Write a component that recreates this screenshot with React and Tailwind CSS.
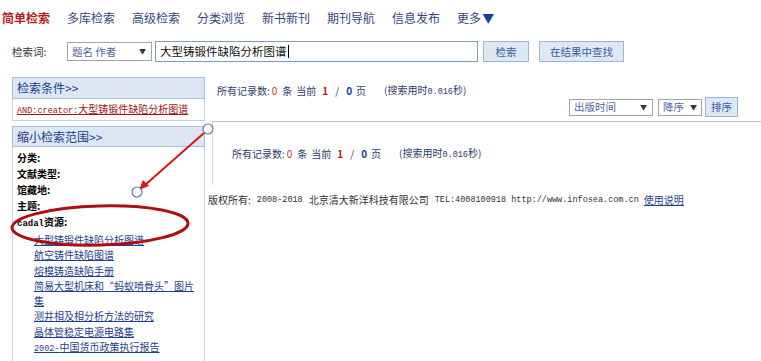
import React from 'react';

const cjk = { fontFamily: '"Noto Sans CJK SC", "Liberation Sans", sans-serif' };
const mono = { fontFamily: '"Liberation Mono", "Noto Sans CJK SC", monospace' };

const navItems = ['多库检索', '高级检索', '分类浏览', '新书新刊', '期刊导航', '信息发布'];

const links = [
  '大型铸锻件缺陷分析图谱',
  '航空铸件缺陷图谱',
  '熔模铸造缺陷手册',
];

const links2 = ['测井相及相分析方法的研究', '晶体管稳定电源电路集'];

const Annotations = () => (
  <svg className="absolute inset-0 pointer-events-none" width="761" height="361" viewBox="0 0 761 361">
    <ellipse cx="100" cy="225.5" rx="88" ry="19.5" fill="none" stroke="#b00d10" strokeWidth="3" transform="rotate(-1.5 100 225.5)" />
    <line x1="204" y1="133" x2="145" y2="185" stroke="#e01414" strokeWidth="2" />
    <path d="M139 190 L143 180 L149 186 Z" fill="#e01414" />
    <circle cx="208" cy="129" r="5" fill="#ffffff" stroke="#6f7a86" strokeWidth="1.2" />
    <circle cx="137" cy="192" r="5" fill="#ffffff" stroke="#5a78a8" strokeWidth="1.2" />
  </svg>
);

const RecordLine = () => (
  <div className="flex items-center leading-[16px] text-[10px] text-[#2d3d6d] whitespace-nowrap">
    <span>所有记录数:</span>
    <span className="ml-[2px] text-[#c0392b]">0</span>
    <span className="ml-[5px]">条</span>
    <span className="ml-[4px]">当前</span>
    <span className="ml-[6px] font-bold text-[#b71c1c]">1</span>
    <span className="ml-[7px]">/</span>
    <span className="ml-[7px] font-bold text-[#1a3a9a]">0</span>
    <span className="ml-[4px]">页</span>
    <span className="ml-[18px]">(搜索用时<span style={mono} className="text-[8.5px]">0.016</span>秒)</span>
  </div>
);

const App = () => {
  return (
    <div className="relative w-[761px] h-[361px] overflow-hidden bg-white text-[#333]" style={cjk}>
      {/* top navigation */}
      <div className="flex items-center h-[36px] pl-[2px] gap-[17px] text-[12px] text-[#34477c] whitespace-nowrap">
        <span className="font-bold text-[#b71c1c]">简单检索</span>
        {navItems.map((n) => (
          <span key={n}>{n}</span>
        ))}
        <span className="flex items-center">
          更多<span className="text-[#1a3c9c] text-[12px] ml-[1px]">▼</span>
        </span>
      </div>

      {/* search row */}
      <div className="flex items-center h-[21px] mt-[5px] whitespace-nowrap">
        <span className="ml-[12px] w-[55px] text-[10.5px] text-[#333]">检索词:</span>
        <div className="flex items-center justify-between w-[85px] h-[19px] border border-[#a5a5a5] bg-white pl-[4px] pr-[5px] text-[10.5px] text-[#5566a0]">
          <span>题名 作者</span>
          <span className="text-[7px] text-[#333]">▼</span>
        </div>
        <div className="flex items-center ml-[3px] w-[323px] h-[21px] border border-[#7f9db9] bg-white pl-[4px] text-[11.5px] text-[#111]">
          <span>大型铸锻件缺陷分析图谱</span>
          <span className="w-px h-[13px] bg-black ml-[1px]" />
        </div>
        <button className="ml-[5px] w-[46px] h-[21px] border border-[#9fb5d3] bg-[#dde8f5] text-[10.5px] text-[#3a5a9a]">检索</button>
        <button className="ml-[10px] w-[85px] h-[21px] border border-[#9fb5d3] bg-[#dde8f5] text-[10.5px] text-[#3a5a9a]">在结果中查找</button>
      </div>

      {/* main */}
      <div className="flex mt-[15px]">
        {/* left column */}
        <div className="ml-[12px] w-[193px] flex flex-col">
          <div className="h-[22px] border border-[#a8bedb] bg-[#dce7f3] flex items-center pl-[4px] text-[12px] text-[#1e3f8a]">
            检索条件&gt;&gt;
          </div>
          <div className="h-[22px] border border-t-0 border-[#c3d1e4] flex items-center pl-[4px] text-[10px] text-[#a31515] whitespace-nowrap">
            <span className="underline">
              <span style={mono} className="text-[8.5px]">AND:creator:</span>大型铸锻件缺陷分析图谱
            </span>
          </div>
          <div className="mt-[5px] h-[21px] border border-[#a8bedb] bg-[#dce7f3] flex items-center pl-[4px] text-[12px] text-[#1e3f8a]">
            缩小检索范围&gt;&gt;
          </div>
          <div className="h-[220px] border-l border-r border-[#c3d1e4] pt-[3px] text-[10px] text-black whitespace-nowrap">
            <div className="pl-[4px] leading-[16px] font-bold">分类:</div>
            <div className="pl-[4px] leading-[16px] font-bold">文献类型:</div>
            <div className="pl-[4px] leading-[16px] font-bold">馆藏地:</div>
            <div className="pl-[4px] leading-[16px] font-bold">主题:</div>
            <div className="pl-[4px] leading-[15px] font-bold">
              <span style={mono} className="text-[9px]">cadal</span>资源:
            </div>
            <div className="pl-[21px] leading-[15.3px] text-[#1f3f8f] flex flex-col items-start">
              {links.map((l) => (
                <span key={l} className="underline">{l}</span>
              ))}
              <span className="underline">简易大型机床和“蚂蚁啃骨头”图片<br />集</span>
              {links2.map((l) => (
                <span key={l} className="underline">{l}</span>
              ))}
              <span className="underline">
                <span style={mono} className="text-[8.5px]">2002-</span>中国货币政策执行报告
              </span>
            </div>
          </div>
        </div>

        {/* right column */}
        <div className="ml-[3px] flex-1 flex flex-col">
          <div className="ml-[4px] h-[45px] border-b border-[#b7c3d6] pt-[5px]">
            <div className="pl-[5px]">
              <RecordLine />
            </div>
            <div className="flex justify-end items-center mt-[-3px] h-[20px] pr-[23px] text-[10.5px] whitespace-nowrap">
              <div className="flex items-center justify-between w-[84px] h-[17px] border border-[#a5a5a5] pl-[4px] pr-[5px] text-[#5566a0]">
                <span>出版时间</span>
                <span className="text-[7px] text-[#333]">▼</span>
              </div>
              <div className="flex items-center justify-between ml-[5px] w-[44px] h-[17px] border border-[#a5a5a5] pl-[4px] pr-[4px] text-[#5566a0]">
                <span>降序</span>
                <span className="text-[7px] text-[#333]">▼</span>
              </div>
              <button className="ml-[3px] w-[33px] h-[20px] border border-[#9fb5d3] bg-[#dde8f5] text-[#3a5a9a]">排序</button>
            </div>
          </div>
          <div className="ml-[4px] h-[63px] border-l border-[#d0d9e6] pl-[19px] pt-[23px]">
            <RecordLine />
          </div>
          <div className="flex items-center mt-[8px] leading-[14px] text-[10px] text-[#333] whitespace-nowrap">
            <span>版权所有:</span>
            <span style={mono} className="ml-[6px] text-[8.5px]">2008-2018</span>
            <span className="ml-[6px]">北京清大新洋科技有限公司</span>
            <span style={mono} className="ml-[6px] text-[8.5px]">TEL:4008100918 http://www.infosea.com.cn</span>
            <span className="ml-[5px] underline text-[#1f3f8f]">使用说明</span>
          </div>
        </div>
      </div>

      <Annotations />
    </div>
  );
};

export default App;
